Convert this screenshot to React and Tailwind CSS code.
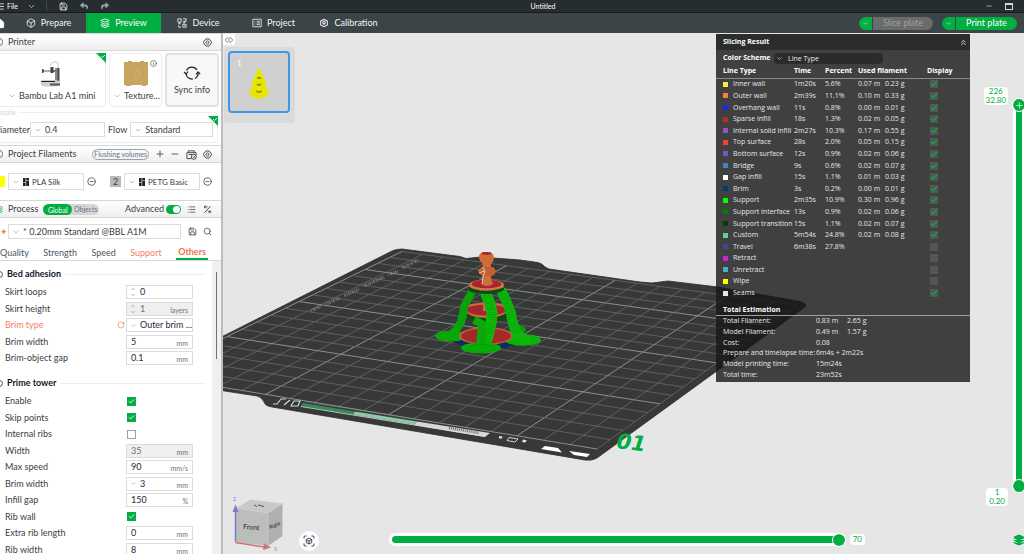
import { useState } from 'react';
import {
  Box,
  Check,
  ChevronDown,
  ChevronsUp,
  ChevronUp,
  CircleMinus,
  Home,
  Info,
  Layers,
  List,
  Menu,
  Minus,
  Plus,
  RotateCw,
  Save,
  Search,
} from 'lucide-react';
import { FaReply, FaShare } from 'react-icons/fa';

const TABS = ['Prepare', 'Preview', 'Device', 'Project', 'Calibration'];

const LINE_TYPES = [
  ['Inner wall', '#ffe64d', '1m20s', '5.6%', '0.07 m', '0.23 g', true],
  ['Outer wall', '#ff7d38', '2m39s', '11.1%', '0.10 m', '0.33 g', true],
  ['Overhang wall', '#1f1fff', '11s', '0.8%', '0.00 m', '0.01 g', true],
  ['Sparse infill', '#b03029', '18s', '1.3%', '0.02 m', '0.05 g', true],
  ['Internal solid infill', '#9654cc', '2m27s', '10.3%', '0.17 m', '0.55 g', true],
  ['Top surface', '#f04040', '28s', '2.0%', '0.05 m', '0.15 g', true],
  ['Bottom surface', '#665cc7', '12s', '0.9%', '0.02 m', '0.06 g', true],
  ['Bridge', '#4d80ba', '9s', '0.6%', '0.02 m', '0.07 g', true],
  ['Gap infill', '#ffffff', '15s', '1.1%', '0.01 m', '0.03 g', true],
  ['Brim', '#003b6e', '3s', '0.2%', '0.00 m', '0.01 g', true],
  ['Support', '#00ff00', '2m35s', '10.9%', '0.30 m', '0.96 g', true],
  ['Support interface', '#008000', '13s', '0.9%', '0.02 m', '0.06 g', true],
  ['Support transition', '#004000', '15s', '1.1%', '0.02 m', '0.07 g', true],
  ['Custom', '#5ed194', '5m54s', '24.8%', '0.02 m', '0.08 g', true],
  ['Travel', '#38489b', '6m38s', '27.8%', '', '', false],
  ['Retract', '#cd22d6', '', '', '', '', false],
  ['Unretract', '#49adcf', '', '', '', '', false],
  ['Wipe', '#ffff00', '', '', '', '', false],
  ['Seams', '#e6e6e6', '', '', '', '', true],
];

const TOTALS = [
  ['Total Filament:', '0.83 m', '2.65 g'],
  ['Model Filament:', '0.49 m', '1.57 g'],
  ['Cost:', '0.08', ''],
  ['Prepare and timelapse time:', '6m4s + 2m22s', ''],
  ['Model printing time:', '15m24s', ''],
  ['Total time:', '23m52s', ''],
];

const BED_ADHESION = [
  { id: 'skirt-loops', label: 'Skirt loops', kind: 'spin', value: '0' },
  { id: 'skirt-height', label: 'Skirt height', kind: 'spin', value: '1', unit: 'layers', disabled: true },
  { id: 'brim-type', label: 'Brim type', kind: 'select', value: 'Outer brim ...', changed: true },
  { id: 'brim-width', label: 'Brim width', kind: 'text', value: '5', unit: 'mm' },
  { id: 'brim-gap', label: 'Brim-object gap', kind: 'text', value: '0.1', unit: 'mm' },
];

const PRIME_TOWER = [
  { id: 'enable', label: 'Enable', kind: 'check', value: true },
  { id: 'skip-points', label: 'Skip points', kind: 'check', value: true },
  { id: 'internal-ribs', label: 'Internal ribs', kind: 'check', value: false },
  { id: 'tower-width', label: 'Width', kind: 'text', value: '35', unit: 'mm', disabled: true },
  { id: 'max-speed', label: 'Max speed', kind: 'text', value: '90', unit: 'mm/s' },
  { id: 'tower-brim', label: 'Brim width', kind: 'select', value: '3', unit: 'mm' },
  { id: 'infill-gap', label: 'Infill gap', kind: 'text', value: '150', unit: '%' },
  { id: 'rib-wall', label: 'Rib wall', kind: 'check', value: true },
  { id: 'rib-length', label: 'Extra rib length', kind: 'text', value: '0', unit: 'mm' },
  { id: 'rib-width', label: 'Rib width', kind: 'text', value: '8', unit: 'mm' },
];

// Corners of the printable area on screen: back left, back right, front right, front left
const BED = [[402, 251.5], [797.7, 305], [597, 449], [148, 375]];

function project(u, v) {
  const [[x0, y0], [x1, y1], [x2, y2], [x3, y3]] = BED;
  const dx1 = x1 - x2;
  const dx2 = x3 - x2;
  const dx3 = x0 - x1 + x2 - x3;
  const dy1 = y1 - y2;
  const dy2 = y3 - y2;
  const dy3 = y0 - y1 + y2 - y3;
  const det = dx1 * dy2 - dx2 * dy1;
  const g = (dx3 * dy2 - dx2 * dy3) / det;
  const h = (dx1 * dy3 - dx3 * dy1) / det;
  const w = g * u + h * v + 1;
  return [
    ((x1 - x0 + g * x1) * u + (x3 - x0 + h * x3) * v + x0) / w,
    ((y1 - y0 + g * y1) * u + (y3 - y0 + h * y3) * v + y0) / w,
  ];
}

const GRID = Array.from({ length: 19 }, (_, i) => {
  const t = i / 18;
  return [
    { from: project(t, 0), to: project(t, 1), bold: i % 5 === 0 },
    { from: project(0, t), to: project(1, t), bold: (18 - i) % 5 === 0 },
  ];
}).flat();

function GearIcon({ className }) {
  return (
    <svg viewBox="0 0 24 24" className={className} fill="none" stroke="currentColor" strokeWidth="2.400">
      <path d="M8 2.500h8l1.500 3 3 1.200 2 5.300-2 5.300-3 1.200-1.500 3H8l-1.500-3-3-1.200-2-5.300 2-5.300 3-1.200z" />
      <circle cx="12" cy="12" r="4" />
    </svg>
  );
}

function TabIcon({ name }) {
  const cls = 'size-[10px] shrink-0';
  if (name === 'Prepare') return <Box className={cls} strokeWidth={2} />;
  if (name === 'Preview') {
    return (
      <svg viewBox="0 0 24 24" className={cls} fill="none" stroke="currentColor" strokeWidth="2">
        <path d="M12 2l10 4-10 4L2 6zM2 11l10 4 10-4M2 15l10 4 10-4M2 19l10 4 10-4" />
      </svg>
    );
  }
  if (name === 'Device') {
    return (
      <svg viewBox="0 0 24 24" className={cls} fill="none" stroke="currentColor" strokeWidth="2">
        <path d="M2 2h8v8H2zM14 2h8v6h-8M6 10v4M3 14h6M18 8v4h-4M4 18v4h6M14 15h8v7h-8zM17 18h2" />
      </svg>
    );
  }
  if (name === 'Project') {
    return (
      <svg viewBox="0 0 24 24" className={cls} fill="none" stroke="currentColor" strokeWidth="2">
        <path d="M2 3h20v18H2zM6 8h2M11 8h8M6 12h2M11 12h8M6 16h2M11 16h8" />
      </svg>
    );
  }
  return (
    <svg viewBox="0 0 24 24" className={cls} fill="none" stroke="currentColor" strokeWidth="2.500">
      <path d="M12 3l8 4.500v9L12 21l-8-4.500v-9z" />
      <circle cx="12" cy="11" r="3" />
      <path d="M12 14v3" />
    </svg>
  );
}

function TitleBar() {
  return (
    <header className="grid h-[13px] shrink-0 grid-cols-3 items-center border-b border-[#171b1c] bg-[#262c2f] pb-[3px] text-[7px] text-white">
      <div className="flex items-center">
        <button aria-label="Menu" className="-ml-1 mr-[2px]"><Menu className="size-[9px]" /></button>
        <button className="mr-[9px]">File</button>
        <ChevronDown className="mr-[10px] size-[9px] text-gray-300" />
        <span className="mr-[12px] h-[10px] w-px bg-[#454b4e]" />
        <button aria-label="Save" className="mr-[12px]"><Save className="size-[9px]" /></button>
        <button aria-label="Undo" className="mr-[13px] text-gray-400"><FaReply className="size-[8px]" /></button>
        <button aria-label="Redo" className="text-gray-400"><FaShare className="size-[8px]" /></button>
      </div>
      <h1 className="pl-[62px] text-center">Untitled</h1>
      <div className="flex items-center justify-end gap-[12px] pr-[11px] text-gray-300">
        <button aria-label="Minimize"><Minus className="size-[8px]" /></button>
        <button aria-label="Maximize" className="h-[7px] w-[8px] border border-t-2 border-gray-300" />
      </div>
    </header>
  );
}

function PlateButton({ label, disabled }) {
  return (
    <div className="flex h-[13px] gap-px overflow-hidden rounded-full text-[9px]">
      <button aria-label={`${label} options`} className="flex w-[13px] items-center justify-center bg-[#00ae42] text-white">
        <ChevronDown className="size-[7px]" />
      </button>
      <button
        disabled={disabled}
        className={disabled ? 'w-[60px] bg-[#6b6b6b] text-[#a0a0a0]' : 'w-[61px] bg-[#00ae42] text-white'}
      >
        {label}
      </button>
    </div>
  );
}

function NavBar({ tab, setTab }) {
  return (
    <nav className="flex h-[20px] shrink-0 items-center bg-[#3b4446] text-[9px] text-gray-100">
      <button aria-label="Home" className="w-[11px] shrink-0">
        <Home className="-ml-[6px] size-[11px] fill-white text-white" />
      </button>
      {TABS.map((name) => (
        <button
          key={name}
          onClick={() => setTab(name)}
          className={`flex h-full w-[75px] items-center justify-center gap-[5px] ${tab === name ? 'bg-[#00ae42] text-white' : ''}`}
        >
          <TabIcon name={name} />
          {name}
        </button>
      ))}
      <div className="ml-auto flex gap-[9px] pr-[7px]">
        <PlateButton label="Slice plate" disabled />
        <PlateButton label="Print plate" />
      </div>
    </nav>
  );
}

function SectionHeader({ icon, title, children }) {
  return (
    <div className="flex h-[18px] shrink-0 items-center border-b border-t border-[#d6d6d6] bg-gradient-to-b from-white to-[#efefef] pr-[9px]">
      <span className="-ml-[6px] mr-[5px] flex w-[9px] shrink-0 justify-end">{icon}</span>
      <h2 className="shrink-0">{title}</h2>
      {children}
    </div>
  );
}

function Picker({ id, label, value, icon, className }) {
  return (
    <div className={`flex items-center border border-[#dcdcdc] bg-white pl-[3px] ${className}`}>
      <ChevronDown className="size-[8px] shrink-0 text-gray-400" />
      {icon && (
        <svg viewBox="0 0 6 8" className="ml-[3px] h-[8px] w-[6px] shrink-0">
          <path d="M0 0h2.600v4.500H0zM3.200 0H6v2.500H3.200zM0 5h2.600v3H0zM3.200 3H6v5H3.200z" fill="#222" />
        </svg>
      )}
      <select id={id} aria-label={label} className="min-w-0 flex-1 appearance-none bg-transparent pl-[3px] outline-none">
        <option>{value}</option>
      </select>
    </div>
  );
}

function GreenCorner() {
  return (
    <svg viewBox="0 0 10 10" className="absolute -right-px -top-px size-[10px]">
      <path d="M0 0h10v10z" fill="#00ae42" />
      <path d="M5 3l1.500 1.500L9 2" stroke="#fff" fill="none" strokeWidth="0.800" />
    </svg>
  );
}

function PrinterDrawing() {
  return (
    <svg viewBox="0 0 20 28" className="h-[28px] w-[20px]">
      <path d="M9 7a5 5 0 0 1 7.500-3.500Q18 5 16.500 10" fill="none" stroke="#aaa" strokeWidth="0.700" />
      <path d="M14 9h4v14h-4z" fill="#888" />
      <path d="M16.500 9h2v14h-2z" fill="#4a4a4a" />
      <path d="M1 11h15v2H1z" fill="#777" />
      <path d="M3 11.500h9v1H3z" fill="#e4e4e4" />
      <path d="M9.500 8h3v6h-3zM1 10h1.500v4H1z" fill="#444" />
      <path d="M1 21h12l6 1v4l-3 1.500H2L0 26z" fill="#d0d0d0" />
      <path d="M0 22h14v1H0z" fill="#222" />
      <path d="M9 24.500h10v2H9z" fill="#555" />
    </svg>
  );
}

function PrinterSection() {
  return (
    <section>
      <SectionHeader icon={<span className="h-[8px] w-[7px] rounded-sm border border-gray-500" />} title="Printer">
        <button aria-label="Printer settings" className="ml-auto"><GearIcon className="size-[9px]" /></button>
      </SectionHeader>
      <div className="flex gap-[3px] pr-[2px] pt-[2px]">
        <div className="relative -ml-1 flex h-[54px] flex-1 flex-col items-center justify-between rounded border border-[#eee] pt-[5px] pb-[4px]">
          <GreenCorner />
          <PrinterDrawing />
          <Picker label="Printer" value="Bambu Lab A1 mini" className="w-[92px] border-none" />
        </div>
        <div className="relative flex h-[54px] w-[53px] flex-col items-center justify-between rounded border border-[#eee] pt-[7px] pb-[4px]">
          <svg viewBox="0 0 24 26" className="h-[26px] w-[24px]">
            <path d="M0 1h4V0h4v1h8V0h4v1h4v23h-2v1h-4v-1H7v1H2v-1H0z" fill="#c9a461" />
            <path d="M11 11l3-2 2 5-3 4-3-2z" fill="none" stroke="#d8bb82" strokeWidth="0.600" />
          </svg>
          <Info className="absolute right-[4px] top-[6px] size-[7px]" />
          <Picker label="Plate" value="Texture..." className="w-[51px] border-none" />
        </div>
        <button className="flex h-[54px] w-[54px] flex-col items-center justify-center gap-[3px] rounded border-2 border-[#e2e2e2] bg-[#f8f8f8]">
          <svg viewBox="0 0 18 16" className="h-[16px] w-[18px]" fill="none" stroke="#222" strokeWidth="1.200">
            <path d="M3.500 5.500a6 6 0 0 1 10.500-.5M15 7.500a6 6 0 0 1-3 6M3 8.500a6 6 0 0 0 7 5.500" />
            <path d="M1 7l2.200 2L5 6.500M13 9.500L15 7l2.200 2.200" />
          </svg>
          Sync info
        </button>
      </div>
      <fieldset className="relative mr-[3px] flex h-[36px] items-center rounded-r border border-l-0 border-[#eee]">
        <legend className="pr-[2px] text-[7px] leading-[10px] text-gray-300">ozzle</legend>
        <GreenCorner />
        <div className="flex items-center">
          <label htmlFor="diameter" className="w-[30px] shrink-0">iameter</label>
          <Picker id="diameter" value="0.4" className="h-[15px] w-[75px]" />
          <label htmlFor="flow" className="mx-[3px] shrink-0">Flow</label>
          <Picker id="flow" value="Standard" className="h-[15px] w-[83px]" />
        </div>
      </fieldset>
    </section>
  );
}

function FilamentSection() {
  return (
    <section className="pt-[2px]">
      <SectionHeader icon={<span className="h-[8px] w-[7px] rounded-full border border-gray-500" />} title="Project Filaments">
        <button className="ml-auto h-[11px] rounded-full border border-gray-400 px-px text-[7px] leading-[9px] text-gray-500">
          Flushing volumes
        </button>
        <button aria-label="Add filament" className="ml-[6px]"><Plus className="size-[10px]" /></button>
        <button aria-label="Remove filament" className="ml-[5px]"><Minus className="size-[10px]" /></button>
        <button aria-label="Sync filaments" className="ml-[6px]">
          <svg viewBox="0 0 24 24" className="size-[11px]" fill="none" stroke="currentColor" strokeWidth="2">
            <path d="M5 8V4h13v4M2 8h20v5M2 8v13h10M6 12h7" />
            <circle cx="17" cy="17" r="5.500" />
            <path d="M15 17l2 2 3-4" />
          </svg>
        </button>
        <button aria-label="Filament settings" className="ml-[6px]"><GearIcon className="size-[9px]" /></button>
      </SectionHeader>
      <div className="flex items-center py-[10px] pr-[9px] text-[8px]">
        <button aria-label="Filament 1" className="-ml-[6px] mr-[3px] h-[11px] w-[11px] bg-[#ffff00]" />
        <Picker label="Filament 1" value="PLA Silk" icon className="h-[17px] w-[76px]" />
        <button aria-label="Remove filament 1" className="ml-[3px]"><CircleMinus className="size-[9px]" /></button>
        <button className="ml-auto mr-[3px] h-[11px] w-[11px] bg-[#b9b9b9] text-[9px] leading-[11px]">2</button>
        <Picker label="Filament 2" value="PETG Basic" icon className="h-[17px] w-[76px]" />
        <button aria-label="Remove filament 2" className="ml-[3px]"><CircleMinus className="size-[9px]" /></button>
      </div>
    </section>
  );
}

function Field({ field }) {
  const { id, label, kind, value, unit, disabled, changed } = field;
  return (
    <div className="flex items-center pl-[5px]">
      <label htmlFor={id} className={`w-[112px] ${changed ? 'text-[#f4805f]' : ''}`}>{label}</label>
      <span className="w-[9px] text-[#f4805f]">
        {changed && <RotateCw className="size-[8px]" />}
      </span>
      {kind === 'check' ? (
        <span className="relative flex h-[14px] w-[67px] items-center">
          <input
            id={id}
            type="checkbox"
            defaultChecked={value}
            className="peer ml-[1px] size-[9px] appearance-none border border-gray-400 checked:border-[#00ae42] checked:bg-[#00ae42]"
          />
          <Check className="pointer-events-none absolute left-[2px] hidden size-[7px] text-white peer-checked:block" strokeWidth={3} />
        </span>
      ) : (
        <span className={`flex h-[14px] w-[67px] items-center border border-[#dcdcdc] ${disabled ? 'bg-[#efefef] text-gray-500' : 'bg-white text-gray-800'}`}>
          {kind === 'spin' && (
            <span className="flex w-[9px] shrink-0 flex-col items-end text-gray-500">
              <ChevronUp className="size-[6px]" />
              <ChevronDown className="size-[6px]" />
            </span>
          )}
          {kind === 'select' && <ChevronDown className="ml-[3px] size-[7px] shrink-0 text-gray-400" />}
          {kind === 'select' ? (
            <select id={id} className="min-w-0 flex-1 appearance-none bg-transparent pl-[3px]">
              <option>{value}</option>
            </select>
          ) : (
            <input id={id} defaultValue={value} disabled={disabled} className="w-0 min-w-0 flex-1 bg-transparent pl-[4px]" />
          )}
          {unit && <span className="shrink-0 pr-[4px] pt-[2px] text-[7px] text-gray-500">{unit}</span>}
        </span>
      )}
    </div>
  );
}

function Group({ title, children }) {
  return (
    <div>
      <div className="flex items-center gap-[4px]">
        <span className="-ml-[5px] h-[7px] w-[8px] shrink-0 rounded-sm border border-gray-600" />
        <h3 className="font-bold text-gray-900">{title}</h3>
        <span className="h-px flex-1 bg-[#eee]" />
      </div>
      {children}
    </div>
  );
}

function ProcessSection() {
  return (
    <section className="flex min-h-0 flex-1 flex-col">
      <SectionHeader icon={<Layers className="size-[9px] text-[#00ae42]" />} title="Process">
        <div className="ml-[5px] flex h-[11px] items-center rounded-full bg-[#d6d6d6] text-[7px]">
          <button className="h-full w-[29px] rounded-full bg-[#00ae42] text-white">Global</button>
          <button className="w-[27px] text-gray-500">Objects</button>
        </div>
        <label htmlFor="advanced" className="ml-auto">Advanced</label>
        <span className="relative ml-[2px] flex h-[9px] w-[15px]">
          <input id="advanced" type="checkbox" defaultChecked className="size-full appearance-none rounded-full bg-gray-300 checked:bg-[#00ae42]" />
          <span className="pointer-events-none absolute right-[1px] top-[1px] size-[7px] rounded-full bg-white" />
        </span>
        <button aria-label="Setting list" className="ml-[6px]"><List className="size-[9px]" /></button>
        <button aria-label="Compare" className="ml-[7px]">
          <svg viewBox="0 0 24 24" className="size-[9px]" fill="none" stroke="currentColor" strokeWidth="2.500">
            <path d="M20 3L4 21M3 5h9M3 5l4-3M3 5l4 4M21 18h-8M21 18l-4-4M21 18l-4 4" />
          </svg>
        </button>
      </SectionHeader>
      <div className="flex items-center pr-[9px] pt-[6px]">
        <span className="w-[8px] text-[#f4805f]">✦</span>
        <Picker label="Preset" value="* 0.20mm Standard @BBL A1M" className="h-[15px] flex-1" />
        <button aria-label="Save preset" className="ml-[7px]"><Save className="size-[9px]" /></button>
        <button aria-label="Search" className="ml-[6px]"><Search className="size-[9px]" /></button>
      </div>
      <div role="tablist" className="flex shrink-0 items-end justify-between border-b border-[#d9d9d9] pr-[13px] pt-[6px] text-gray-600">
        <button role="tab" className="h-[15px]">Quality</button>
        <button role="tab" className="h-[15px]">Strength</button>
        <button role="tab" className="h-[15px]">Speed</button>
        <button role="tab" className="h-[15px] text-[#f4805f]">Support</button>
        <button role="tab" aria-selected="true" className="h-[15px] border-b-2 border-[#00ae42] px-[2px] font-bold text-[#f4704a]">Others</button>
      </div>
      <div className="flex min-h-0 flex-1">
        <div className="flex min-w-0 flex-1 flex-col gap-[12px] overflow-hidden pr-[7px] pt-[7px]">
          <Group title="Bed adhesion">
            <div className="flex h-[85px] flex-col justify-between pt-[5px]">
              {BED_ADHESION.map((field) => <Field key={field.id} field={field} />)}
            </div>
          </Group>
          <Group title="Prime tower">
            <div className="flex h-[168px] flex-col justify-between pt-[5px]">
              {PRIME_TOWER.map((field) => <Field key={field.id} field={field} />)}
            </div>
          </Group>
        </div>
        <div className="flex w-[9px] shrink-0 justify-center bg-[#efefef] pt-[11px]">
          <span className="h-[87px] w-px bg-gray-500" />
        </div>
      </div>
    </section>
  );
}

function Plate() {
  return (
    <g>
      <path
        d="M392 251Q396 249 402 249L460 256.500L466 258.500L480 257L520 260L538 262.500Q543 264 545 267L549 269L640 282L652 283L668 281L718 287L800 301.500Q808 304 805 307L597 458Q592 461 585 460L272 407Q265 406 264 402Q262 397 257 396L140 378Z"
        fill="#373938"
        stroke="#2b2d2c"
        strokeWidth="0.800"
      />
      {GRID.map(({ from, to, bold }, i) => (
        <line
          key={i}
          x1={from[0]}
          y1={from[1]}
          x2={to[0]}
          y2={to[1]}
          stroke={bold ? '#8d8f8e' : '#686a69'}
          strokeWidth={bold ? 1 : 0.8}
        />
      ))}
      <path d="M418 260L402 268M398 271L388 275M384 277L364 286M359 289L344 296M340 298L326 304M321 306L311 311" stroke="#a5a7a6" strokeWidth="3" strokeDasharray="0.800 1.100 1.600 0.700" opacity="0.550" />
      <path d="M303 403L355 411.500L353 414.500L301 406Z" fill="#2f8f5a" />
      <path d="M355 411.500L417 421.500L414 424.500L353 414.500Z" fill="#8cc9a8" />
      <path d="M417 421.500L490 433L485 437L414 425Z" fill="#d4d7d6" />
      <path d="M301 406.500L485 436.500" stroke="#dfe2e1" strokeWidth="0.800" />
      <path d="M305 401.500L420 420" stroke="#8a8c8b" strokeWidth="1" strokeDasharray="1 1" />
      <path d="M273 404h4l4-5h5M284 405l6-5M291 406l3-5h6l-2 5z" fill="none" stroke="#d4d6d5" strokeWidth="1.200" />
      <path d="M449 428L479 433" stroke="#6d6f6e" strokeWidth="2.500" strokeDasharray="1 1" />
      <path d="M509 437.500L518 439L515 442L507 440.500Z" fill="none" stroke="#e4e6e5" strokeWidth="0.900" />
      <path d="M499 436l4 .8-2 2-2-.5zM523 439.500l4 1-2 2-3-.5z" fill="#e4e6e5" />
      <path d="M545 446L558 448L562 452.500L541 449ZM569 451L590 454L587 457L574 455Z" fill="#fff" />
    </g>
  );
}

function Fountain() {
  return (
    <g>
      <path d="M450 341L470 338L522 341L505 348L470 349Z" fill="#0a2c5e" />
      <ellipse cx="451" cy="336" rx="16" ry="5.500" fill="#08a808" />
      <ellipse cx="523" cy="340" rx="18" ry="5.800" fill="#08b408" />
      <path d="M508 322Q517 322 521 326Q528 327 525 332L512 336Z" fill="#07a007" />
      <ellipse cx="486" cy="336" rx="27" ry="9" fill="#c2603a" />
      <ellipse cx="486" cy="336" rx="25" ry="7.500" fill="#a3282c" />
      <path d="M482 320h6v10h-6z" fill="#c2603a" />
      <path d="M464 314L509 314Q508 321 487 322Q468 321 464 314Z" fill="#0a4d0a" />
      <path d="M464 309Q466 303 480 303L496 303Q508 304 508 310Q505 317 487 318Q468 318 464 309Z" fill="#d06a3e" />
      <ellipse cx="486.500" cy="310" rx="20" ry="5.500" fill="#a3282c" />
      <path d="M483 292h5v19h-5z" fill="#d06a3e" />
      <path d="M472 292Q467 300 464 307Q463 316 461 322Q457 330 450 336" fill="none" stroke="#09a809" strokeWidth="8" strokeLinecap="round" />
      <path d="M486 294Q490 302 492 312Q492 322 489 332Q487 341 484 346" fill="none" stroke="#0cba0c" strokeWidth="11" strokeLinecap="round" />
      <path d="M474 320L482 324L480 345" fill="none" stroke="#0ba90b" strokeWidth="8" />
      <path d="M502 292Q507 302 511 313Q512 324 517 334L525 340" fill="none" stroke="#0bb80b" strokeWidth="10" strokeLinecap="round" />
      <path d="M472 292Q467 300 464 307Q463 316 457 328M486 294Q490 302 492 312Q492 322 489 332L484 346M502 292Q507 302 511 313Q512 324 517 334" fill="none" stroke="#088508" strokeWidth="8" strokeDasharray="0.600 1.800" opacity="0.600" />
      <ellipse cx="481" cy="348" rx="20" ry="5.500" fill="#08ae08" />
      <path d="M468 347Q481 342 494 347M466 349Q481 356 496 349" fill="none" stroke="#079007" strokeWidth="0.700" />
      <path d="M469 288h35v2Q498 294 487 294Q474 294 469 291Z" fill="#0a4d0a" />
      <ellipse cx="486.500" cy="285" rx="17.500" ry="5.800" fill="#d8754a" />
      <ellipse cx="486.500" cy="284" rx="15" ry="4.300" fill="#a8262b" />
      <path d="M482 284Q484 276 482 268L491 268Q490 278 493 284Q487 288 481 284Z" fill="#d36e3c" />
      <path d="M478 271Q480 266 487 267L493 267Q497 270 495 274Q492 277 488 276Q480 277 478 271Z" fill="#c5602f" />
      <path d="M479 257Q479 252 486 252Q494 252 494 258Q494 261 491 264L491 267L483 267Q483 263 480 261Z" fill="#cf6c38" />
      <ellipse cx="486.500" cy="253.500" rx="5" ry="1.400" fill="#a8262b" />
      <path d="M482 267Q487 270 483 276L482 284M479 273l5-2" fill="none" stroke="#e9d6d0" strokeWidth="0.900" />
      <path d="M485 269l6-2M480 290.500h12" stroke="#8759a8" strokeWidth="0.800" strokeDasharray="2 1" />
    </g>
  );
}

function AxisCube() {
  return (
    <g fontFamily="Lato, sans-serif">
      <path d="M236 508L251 499.500L282.500 503.500L268 513Z" fill="#c9c9c9" />
      <path d="M236 508L268 513L268 546L236 542Z" fill="#bdbdbd" />
      <path d="M268 513L282.500 503.500L282.500 536L268 546Z" fill="#b0b0b0" />
      <path d="M236 508L268 513L282.500 503.500M268 513V546" fill="none" stroke="#d2d2d2" strokeWidth="0.600" />
      <path d="M254 505l3 1.500M258 505l6 1.500" stroke="#444" strokeWidth="0.900" />
      <text x="243" y="529" fontSize="7" transform="rotate(4 243 529)" fill="#222">Front</text>
      <text x="270" y="529" fontSize="5" transform="rotate(-22 270 529)" fill="#222">Right</text>
      <path d="M235.500 542V510" stroke="#7a7ac8" strokeWidth="1.500" />
      <path d="M232.500 512L235.500 504.500L238.500 512Z" fill="#7a7ac8" />
      <path d="M235.500 542.500L264 547" stroke="#cf7272" strokeWidth="1.500" />
      <path d="M264 543.500L271 547.500L263 550Z" fill="#cf7272" />
      <path d="M235.500 542L248 535" stroke="#9fcf9f" strokeWidth="1" />
      <path d="M247 532.500L253 532L249 537.500Z" fill="#9fcf9f" />
      <text x="233" y="501" fontSize="7" fill="#8a8ad0">z</text>
      <text x="274" y="551" fontSize="7" fill="#d98080">x</text>
    </g>
  );
}

function SlicingPanel() {
  return (
    <aside className="absolute right-[54px] top-px w-[254px] bg-[#161616]/80 pb-[2px] font-['Open_Sans',sans-serif] text-[7px] text-gray-200">
      <div className="flex h-[16px] items-center justify-between bg-[#2c2c2c] pl-[7px] pr-[2px] font-bold text-white">
        Slicing Result
        <button aria-label="Collapse"><ChevronsUp className="size-[9px]" /></button>
      </div>
      <div className="flex h-[15px] items-center pl-[7px]">
        <label htmlFor="scheme" className="w-[51px] font-bold text-white">Color Scheme</label>
        <span className="mt-[2px] flex h-[11px] w-[109px] items-center rounded-sm bg-[#2b2b2b] pl-[2px]">
          <ChevronDown className="size-[7px]" />
          <select id="scheme" className="flex-1 appearance-none pl-[5px]"><option>Line Type</option></select>
        </span>
      </div>
      <table className="h-[234px] w-full table-fixed border-collapse text-left leading-[10px]">
        <colgroup>
          <col className="w-[78px]" />
          <col className="w-[31px]" />
          <col className="w-[33px]" />
          <col className="w-[27px]" />
          <col className="w-[42px]" />
          <col />
        </colgroup>
        <thead>
          <tr className="h-[13px] border-b border-[#8a8a8a] text-white">
            <th className="pl-[7px]">Line Type</th>
            <th>Time</th>
            <th>Percent</th>
            <th colSpan={2}>Used filament</th>
            <th>Display</th>
          </tr>
        </thead>
        <tbody>
          {LINE_TYPES.map(([name, color, time, percent, meters, grams, shown]) => (
            <tr key={name} className="whitespace-nowrap">
              <td className="pl-[7px]">
                <span className="flex items-center gap-[5px]">
                  <span className="size-[5px] shrink-0" style={{ backgroundColor: color }} />
                  {name}
                </span>
              </td>
              <td>{time}</td>
              <td>{percent}</td>
              <td>{meters}</td>
              <td>{grams}</td>
              <td>
                <span className="relative ml-[3px] flex size-[8px]">
                  <input type="checkbox" aria-label={`Show ${name}`} defaultChecked={shown} className="peer size-full appearance-none bg-[#555]" />
                  <Check className="pointer-events-none absolute left-0 top-0 hidden size-[8px] text-[#00ae42] peer-checked:block" strokeWidth={4} />
                </span>
              </td>
            </tr>
          ))}
        </tbody>
      </table>
      <h2 className="border-b border-[#a0a0a0] pl-[7px] pt-[6px] font-bold leading-[10px] text-white">Total Estimation</h2>
      <table className="h-[64px] text-left leading-[10px]">
        <tbody>
          {TOTALS.map(([label, first, second]) => (
            <tr key={label} className="whitespace-nowrap">
              <th className="w-[100px] pl-[7px] font-normal">{label}</th>
              <td colSpan={second ? 1 : 2} className="w-[31px]">{first}</td>
              {second && <td>{second}</td>}
            </tr>
          ))}
        </tbody>
      </table>
    </aside>
  );
}

function LayerSlider() {
  return (
    <div className="absolute -right-px top-[54px] bottom-[62px] flex">
      <div className="flex flex-col items-end justify-between pr-[5px] text-center text-[8px] leading-[9px] text-[#00ae42]">
        <output className="rounded-sm bg-white px-[2px]">226<br />32.80</output>
        <output className="mb-[-14px] rounded-sm bg-white px-[3px]">1<br />0.20</output>
      </div>
      <div className="relative mt-[12px] w-[12px] rounded-full bg-white">
        <input
          type="range"
          aria-label="Layer"
          defaultValue="100"
          className="absolute left-[3px] top-0 h-full w-[6px] appearance-none bg-[#00ae42] [direction:rtl] [writing-mode:vertical-lr] [&::-webkit-slider-thumb]:appearance-none"
        />
        <span className="pointer-events-none absolute top-0 flex size-[12px] items-center justify-center rounded-full bg-[#00ae42] outline-1 outline-white">
          <Plus className="size-[9px] text-white" />
        </span>
        <span className="pointer-events-none absolute bottom-0 size-[12px] rounded-full bg-[#00ae42] outline-1 outline-white" />
      </div>
    </div>
  );
}

function Viewport() {
  return (
    <main className="relative min-w-0 flex-1 overflow-hidden bg-[#e6e6e6]">
      <svg viewBox="223 33 801 521" preserveAspectRatio="xMidYMid slice" className="absolute inset-0 size-full">
        <Plate />
        <Fountain />
        <text x="616" y="448" fontFamily="DejaVu Sans, sans-serif" fontWeight="bold" fontStyle="italic" fontSize="21" fill="#00ae42" transform="rotate(7 616 448)">01</text>
        <AxisCube />
      </svg>

      <button aria-label="Toggle sidebar" className="absolute left-0 top-px flex h-[11px] w-[12px] items-center justify-center bg-white text-gray-600">
        <svg viewBox="0 0 24 24" className="size-[8px]" fill="none" stroke="currentColor" strokeWidth="2">
          <path d="M9 5Q3 7 1 12q2 5 8 7M15 5q6 2 8 7-2 5-8 7M12 4v16" />
        </svg>
      </button>
      <div className="absolute left-px top-[14px] rounded bg-[#dadada] p-[4px] pb-[10px] pr-[5px]">
        <button className="relative flex size-[62px] items-center justify-center rounded-sm border-2 border-[#3d98ea] bg-[#d0d0d0]">
          <span className="absolute left-[7px] top-[4px] text-[8px] text-white">1</span>
          <svg viewBox="0 0 20 30" className="mt-[3px] h-[30px] w-[20px]">
            <path d="M8 1Q10-1 12 1L13 4L12 6Q16 7 15 10L17 12Q18 15 15 17Q20 19 19.500 24Q19 29 10 29.500Q1 29 .5 24Q0 19 5 17Q2 15 3 12L5 10Q4 7 8 6L7 4Z" fill="#e6e600" />
            <path d="M8 9h4M8 15q2 2 4 0M7 22q3 2 6 0" stroke="#a09c00" strokeWidth="1.800" fill="none" />
          </svg>
        </button>
      </div>

      <SlicingPanel />
      <LayerSlider />

      <button aria-label="Fit view" className="absolute bottom-[3px] left-[76px] flex size-[20px] items-center justify-center rounded-full bg-white text-gray-700">
        <svg viewBox="0 0 24 24" className="size-[12px]" fill="none" stroke="currentColor" strokeWidth="2">
          <path d="M2 7V4q0-2 2-2h3M17 2h3q2 0 2 2v3M22 17v3q0 2-2 2h-3M7 22H4q-2 0-2-2v-3" />
          <path d="M12 6l5.500 3v6L12 18l-5.500-3V9zM6.500 9l5.500 3 5.500-3M12 12v6" />
        </svg>
      </button>
      <div className="absolute bottom-[8px] left-[166px] right-[159px] flex items-center gap-[4px]">
        <div className="relative flex h-[13px] flex-1 items-center rounded-full bg-white pl-[3px] pr-px">
          <input
            type="range"
            aria-label="Move"
            defaultValue="100"
            className="h-[7px] w-full appearance-none rounded-full bg-[#00ae42] [&::-webkit-slider-thumb]:size-[12px] [&::-webkit-slider-thumb]:appearance-none [&::-webkit-slider-thumb]:rounded-full [&::-webkit-slider-thumb]:bg-[#00ae42] [&::-webkit-slider-thumb]:outline-1 [&::-webkit-slider-thumb]:outline-white"
          />
        </div>
        <output className="rounded-sm bg-white px-[3px] text-[8px] leading-[11px] text-[#00ae42]">70</output>
      </div>
      <button aria-label="Layer view" className="absolute -right-px bottom-[8px] text-[#00ae42]">
        <Layers className="size-[12px] fill-[#00ae42]" strokeWidth={2} />
      </button>
    </main>
  );
}

export default function App() {
  const [tab, setTab] = useState('Preview');

  return (
    <div className="flex h-screen flex-col overflow-hidden font-[Lato,sans-serif] text-[9px] leading-[12px] text-[#3a4042]">
      <TitleBar />
      <NavBar tab={tab} setTab={setTab} />
      <div className="flex min-h-0 flex-1">
        <div className="flex w-[223px] shrink-0 flex-col overflow-hidden border-r-2 border-[#bdbdbd] bg-white">
          <PrinterSection />
          <FilamentSection />
          <ProcessSection />
        </div>
        <Viewport />
      </div>
    </div>
  );
}
